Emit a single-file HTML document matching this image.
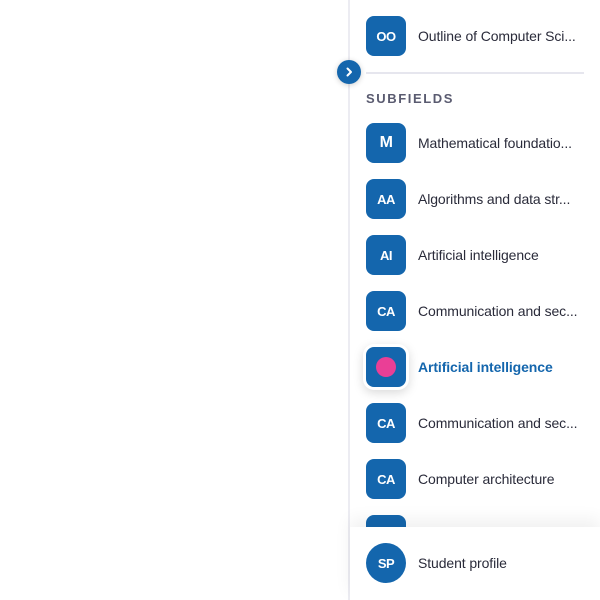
<!DOCTYPE html>
<html><head><style>
body{margin:0;width:600px;height:600px;background:#fff;position:relative;overflow:hidden;font-family:"Liberation Sans",sans-serif;}
.side{position:absolute;left:348px;top:0;width:252px;height:600px;border-left:2px solid #ececf2;box-sizing:border-box;}
.row{position:absolute;left:366px;height:40px;width:220px;}
.ic{position:absolute;left:0;top:0;width:40px;height:40px;border-radius:8px;background:#1466ad;color:#fff;font-weight:900;font-size:13px;display:flex;align-items:center;justify-content:center;letter-spacing:-0.5px}
.tx{position:absolute;left:52px;top:12px;font-size:14px;color:#2a2b3a;white-space:nowrap;letter-spacing:-0.1px}
.div{position:absolute;left:366px;top:72px;width:218px;height:2px;background:#e6e6ee}
.tog{position:absolute;left:337px;top:60px;width:24px;height:24px;border-radius:50%;background:#1466ad;box-shadow:0 1px 6px rgba(0,0,0,.2)}
.sub{position:absolute;left:366px;top:91px;font-size:13px;font-weight:bold;letter-spacing:1.6px;color:#5a5b70}
.foot{position:absolute;left:350px;top:527px;width:250px;height:73px;background:#fff;box-shadow:0 -8px 16px rgba(0,0,0,.06)}
</style></head><body>
<div class="side"></div>
<div class="row" style="top:16px"><div class="ic">OO</div><div class="tx">Outline of Computer Sci...</div></div>
<div class="div"></div>
<div class="tog"><svg width="24" height="24"><path d="M10.5 8.5l3.5 3.5-3.5 3.5" stroke="#fff" stroke-width="2" fill="none" stroke-linecap="round" stroke-linejoin="round"/></svg></div>
<div class="sub">SUBFIELDS</div>
<div class="row" style="top:123px"><div class="ic" style="font-size:16px">M</div><div class="tx">Mathematical foundatio...</div></div>
<div class="row" style="top:179px"><div class="ic">AA</div><div class="tx">Algorithms and data str...</div></div>
<div class="row" style="top:235px"><div class="ic">AI</div><div class="tx">Artificial intelligence</div></div>
<div class="row" style="top:291px"><div class="ic">CA</div><div class="tx">Communication and sec...</div></div>
<div class="row" style="top:347px"><div class="ic" style="box-shadow:0 0 0 3px #fff,0 3px 10px 3px rgba(0,0,0,.15)"><div style="width:20px;height:20px;border-radius:50%;background:#ea3f96"></div></div><div class="tx" style="color:#1466ad;font-weight:bold">Artificial intelligence</div></div>
<div class="row" style="top:403px"><div class="ic">CA</div><div class="tx">Communication and sec...</div></div>
<div class="row" style="top:459px"><div class="ic">CA</div><div class="tx">Computer architecture</div></div>
<div class="row" style="top:515px"><div class="ic"></div></div>
<div class="foot"></div>
<div class="row" style="top:543px"><div class="ic" style="border-radius:50%">SP</div><div class="tx">Student profile</div></div>
</body></html>
